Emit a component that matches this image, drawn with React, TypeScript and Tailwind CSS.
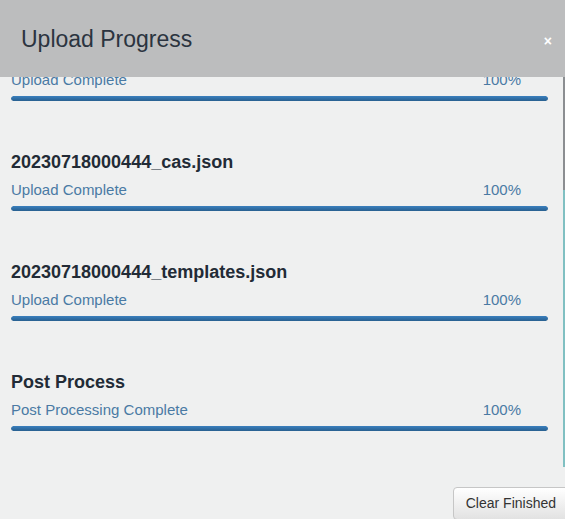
const uploads = [
  { name: "20230718000444_flows.json", status: "Upload Complete", pct: 100 },
  { name: "20230718000444_cas.json", status: "Upload Complete", pct: 100 },
  { name: "20230718000444_templates.json", status: "Upload Complete", pct: 100 },
  { name: "Post Process", status: "Post Processing Complete", pct: 100 },
]

function UploadRow({ name, status, pct }: { name: string; status: string; pct: number }) {
  return (
    <div className="pl-[11px] pr-[15px] mb-[51px]">
      <div className="text-[18px] leading-[20px] font-bold text-[#222b36] whitespace-nowrap">{name}</div>
      <div className="mt-[8px] flex justify-between pr-[27px] text-[15px] leading-[20px] text-[#4a7aa4]">
        <span>{status}</span>
        <span>{pct}%</span>
      </div>
      <div className="mt-[6px] h-[5px] rounded-[3px] bg-[#dcdcdc] overflow-hidden">
        <div
          className="h-full rounded-[3px] bg-gradient-to-b from-[#3a80be] to-[#286090]"
          style={{ width: `${pct}%` }}
        />
      </div>
    </div>
  )
}

export default function App() {
  return (
    <div className="w-[565px] h-[519px] overflow-hidden bg-[#eff0f0] flex flex-col" style={{ fontFamily: '"Liberation Sans", Arial, sans-serif' }}>
      <div className="h-[77px] shrink-0 bg-[#bcbdbe] flex items-center justify-between pl-[21px] pr-[13px]">
        <h1 className="text-[23px] leading-[28px] text-[#2b3440]">Upload Progress</h1>
        <button className="text-white text-[14px] font-bold leading-none mt-[4px]">×</button>
      </div>

      <div className="h-[390px] shrink-0 flex">
        <div className="flex-1 overflow-hidden">
          <div className="-mt-[35px]">
            {uploads.map((u) => (
              <UploadRow key={u.name} {...u} />
            ))}
          </div>
        </div>
        <div className="w-[2px] flex flex-col">
          <div className="h-[113px] bg-[#8b8e91]" />
          <div className="flex-1 bg-[#80c0c2]" />
        </div>
      </div>

      <div className="flex justify-end pt-[20px] -mr-[4px]">
        <button className="h-[33px] px-[12px] border border-[#c6c6c6] rounded-[4px] bg-gradient-to-b from-white to-[#e2e2e2] text-[14px] leading-[20px] text-[#333] pb-[2px]">
          Clear Finished
        </button>
      </div>
    </div>
  )
}
